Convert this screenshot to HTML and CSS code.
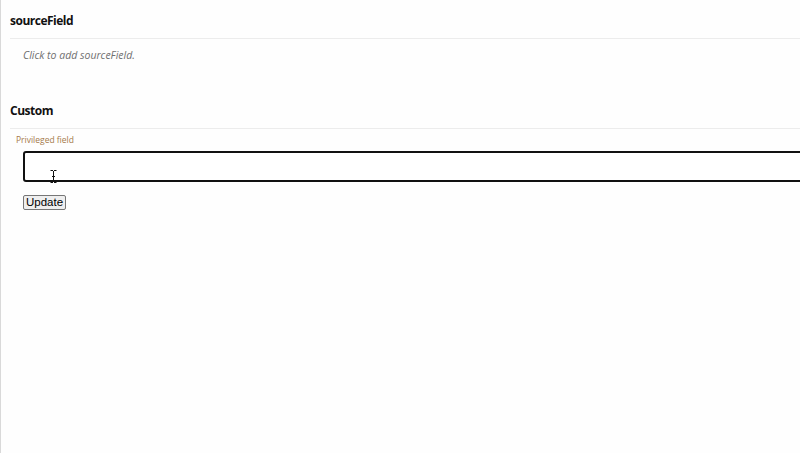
FILE: index.html
```html
<!DOCTYPE html>
<html>
<head>
<meta charset="utf-8">
<link rel="stylesheet" href="styles.css">
</head>
<body>
<div class="page">
  <section class="group group-source">
    <h2 class="group-title">sourceField</h2>
    <div class="group-body">
      <p class="placeholder">Click to add sourceField.</p>
    </div>
  </section>
  <section class="group group-custom">
    <h2 class="group-title">Custom</h2>
    <div class="group-body">
      <label class="field-label" for="priv">Privileged field</label>
      <div class="input-wrap">
        <input id="priv" class="field-input" type="text">
        <svg class="ibeam" width="7" height="13" viewBox="0 0 7 13" aria-hidden="true">
          <path d="M0.5 0.5h2.5M4 0.5h2.5M3.5 1v11M0.5 12.5h2.5M4 12.5h2.5M2 6.5h3" stroke="#111" stroke-width="1" fill="none"/>
        </svg>
      </div>
      <button class="update-btn" type="button">Update</button>
    </div>
  </section>
</div>
</body>
</html>
```
FILE: styles.css
```css
html, body {
  margin: 0;
  padding: 0;
}
body {
  background: #fefefe;
  overflow: hidden;
  font-family: "Open Sans", "Noto Sans", sans-serif;
}
.page {
  width: 799px;
  height: 453px;
  border-left: 1px solid #d9d9d9;
  overflow: hidden;
}
.group {
  padding-left: 9px;
}
.group-title {
  margin: 0;
  font-size: 12px;
  font-weight: 700;
  line-height: 18px;
  color: #111;
  letter-spacing: -0.5px;
  padding-bottom: 8px;
  border-bottom: 1px solid #ececec;
}
.group-source .group-title {
  margin-top: 12px;
}
.group-source .group-body {
  height: 63px;
}
.placeholder {
  margin: 0;
  padding: 9px 0 0 13px;
  font-size: 10.5px;
  line-height: 15px;
  font-style: italic;
  color: #707070;
}
.field-label {
  display: block;
  margin: 4px 0 0 6px;
  font-size: 8.5px;
  line-height: 14px;
  color: #a57a4a;
}
.input-wrap {
  position: relative;
  margin: 4px 0 0 13px;
}
.field-input {
  display: block;
  box-sizing: border-box;
  width: 800px;
  height: 31px;
  border: 2px solid #111;
  border-radius: 3px;
  background: #fff;
  padding: 0 6px;
  margin: 0;
  outline: none;
}
.ibeam {
  position: absolute;
  left: 27px;
  top: 19px;
}
.update-btn {
  display: block;
  margin: 13px 0 0 13px;
  padding: 0 2px;
  height: 15px;
  font-family: "Liberation Sans", Arial, sans-serif;
  font-size: 11.5px;
  line-height: 13px;
  color: #000;
  background: #efefef;
  border: 1px solid #767676;
  border-radius: 2px;
}
```
